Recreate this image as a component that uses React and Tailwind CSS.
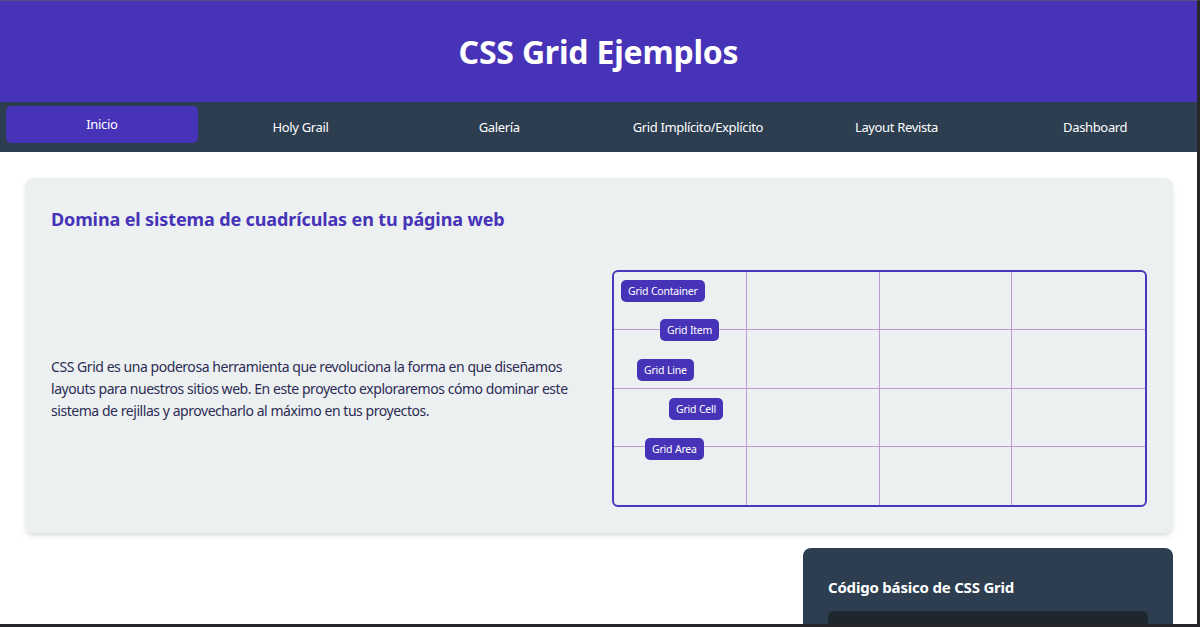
import React from "react";

const tabs = [
  "Inicio",
  "Holy Grail",
  "Galería",
  "Grid Implícito/Explícito",
  "Layout Revista",
  "Dashboard",
];

const labels = [
  { text: "Grid Container", pos: "left-[7px] top-[8px]" },
  { text: "Grid Item", pos: "left-[46px] top-[47px]" },
  { text: "Grid Line", pos: "left-[23px] top-[87px]" },
  { text: "Grid Cell", pos: "left-[55px] top-[126px]" },
  { text: "Grid Area", pos: "left-[31px] top-[166px]" },
];

function GridDemo() {
  return (
    <div className="relative h-[237px] rounded-[6px] border-2 border-[#4a37bd] overflow-hidden">
      <div className="grid grid-cols-4 grid-rows-4 h-full">
        {Array.from({ length: 16 }).map((_, i) => (
          <div
            key={i}
            className={
              "border-[#8e44ad]/50 " +
              (i % 4 !== 3 ? "border-r " : "") +
              (i < 12 ? "border-b" : "")
            }
          ></div>
        ))}
      </div>
      {labels.map((l) => (
        <span
          key={l.text}
          className={`absolute ${l.pos} bg-[#4633b8] text-white text-[10.5px] tracking-[-0.2px] leading-[22px] px-[7px] rounded-[5px]`}
        >
          {l.text}
        </span>
      ))}
    </div>
  );
}

export default function App() {
  return (
    <div className="h-[627px] overflow-hidden bg-white border-t border-t-[#55517a] border-r-[3px] border-b-[3px] border-r-[#26272b] border-b-[#26272b] font-['Noto_Sans',sans-serif]">
      <header className="bg-[#4633b8] h-[101px] flex items-center justify-center">
        <h1 className="text-white text-[32px] font-bold tracking-[-0.2px]">CSS Grid Ejemplos</h1>
      </header>

      <nav className="bg-[#2c3e50] h-[50px] grid grid-cols-6 px-[6px] gap-x-[7px] items-center pt-[1px]">
        {tabs.map((t, i) => (
          <a
            key={t}
            className={
              "text-center text-white text-[13px] tracking-[-0.35px] h-[37px] leading-[37px] rounded-[5px] " +
              (i === 0 ? "bg-[#4633b8] -translate-y-[3px]" : "")
            }
          >
            {t}
          </a>
        ))}
      </nav>

      <main className="pl-[25px] pr-[24px] pt-[26px]">
        <section className="bg-[#ecf0f1] rounded-[8px] shadow-md px-[26px] pt-[27px] pb-[26px]">
          <h2 className="text-[#4633b8] text-[18px] font-bold leading-[28px] tracking-[-0.12px]">
            Domina el sistema de cuadrículas en tu página web
          </h2>
          <div className="grid grid-cols-2 gap-[26px] items-center mt-[37px]">
            <p className="text-[#2c2c54] text-[14px] tracking-[-0.45px] leading-[22px]">
              CSS Grid es una poderosa herramienta que revoluciona la forma en
              que diseñamos layouts para nuestros sitios web. En este proyecto
              exploraremos cómo dominar este sistema de rejillas y aprovecharlo
              al máximo en tus proyectos.
            </p>
            <GridDemo />
          </div>
        </section>

        <div className="flex justify-end mt-[15px]">
          <div className="w-[370px] bg-[#2c3e50] rounded-[8px] px-[25px] pt-[28px] pb-[20px]">
            <h3 className="text-white text-[15px] font-bold tracking-[-0.2px]">
              Código básico de CSS Grid
            </h3>
            <div className="mt-[12px] h-[120px] bg-[#1e272e] rounded-[6px]"></div>
          </div>
        </div>
      </main>
    </div>
  );
}
